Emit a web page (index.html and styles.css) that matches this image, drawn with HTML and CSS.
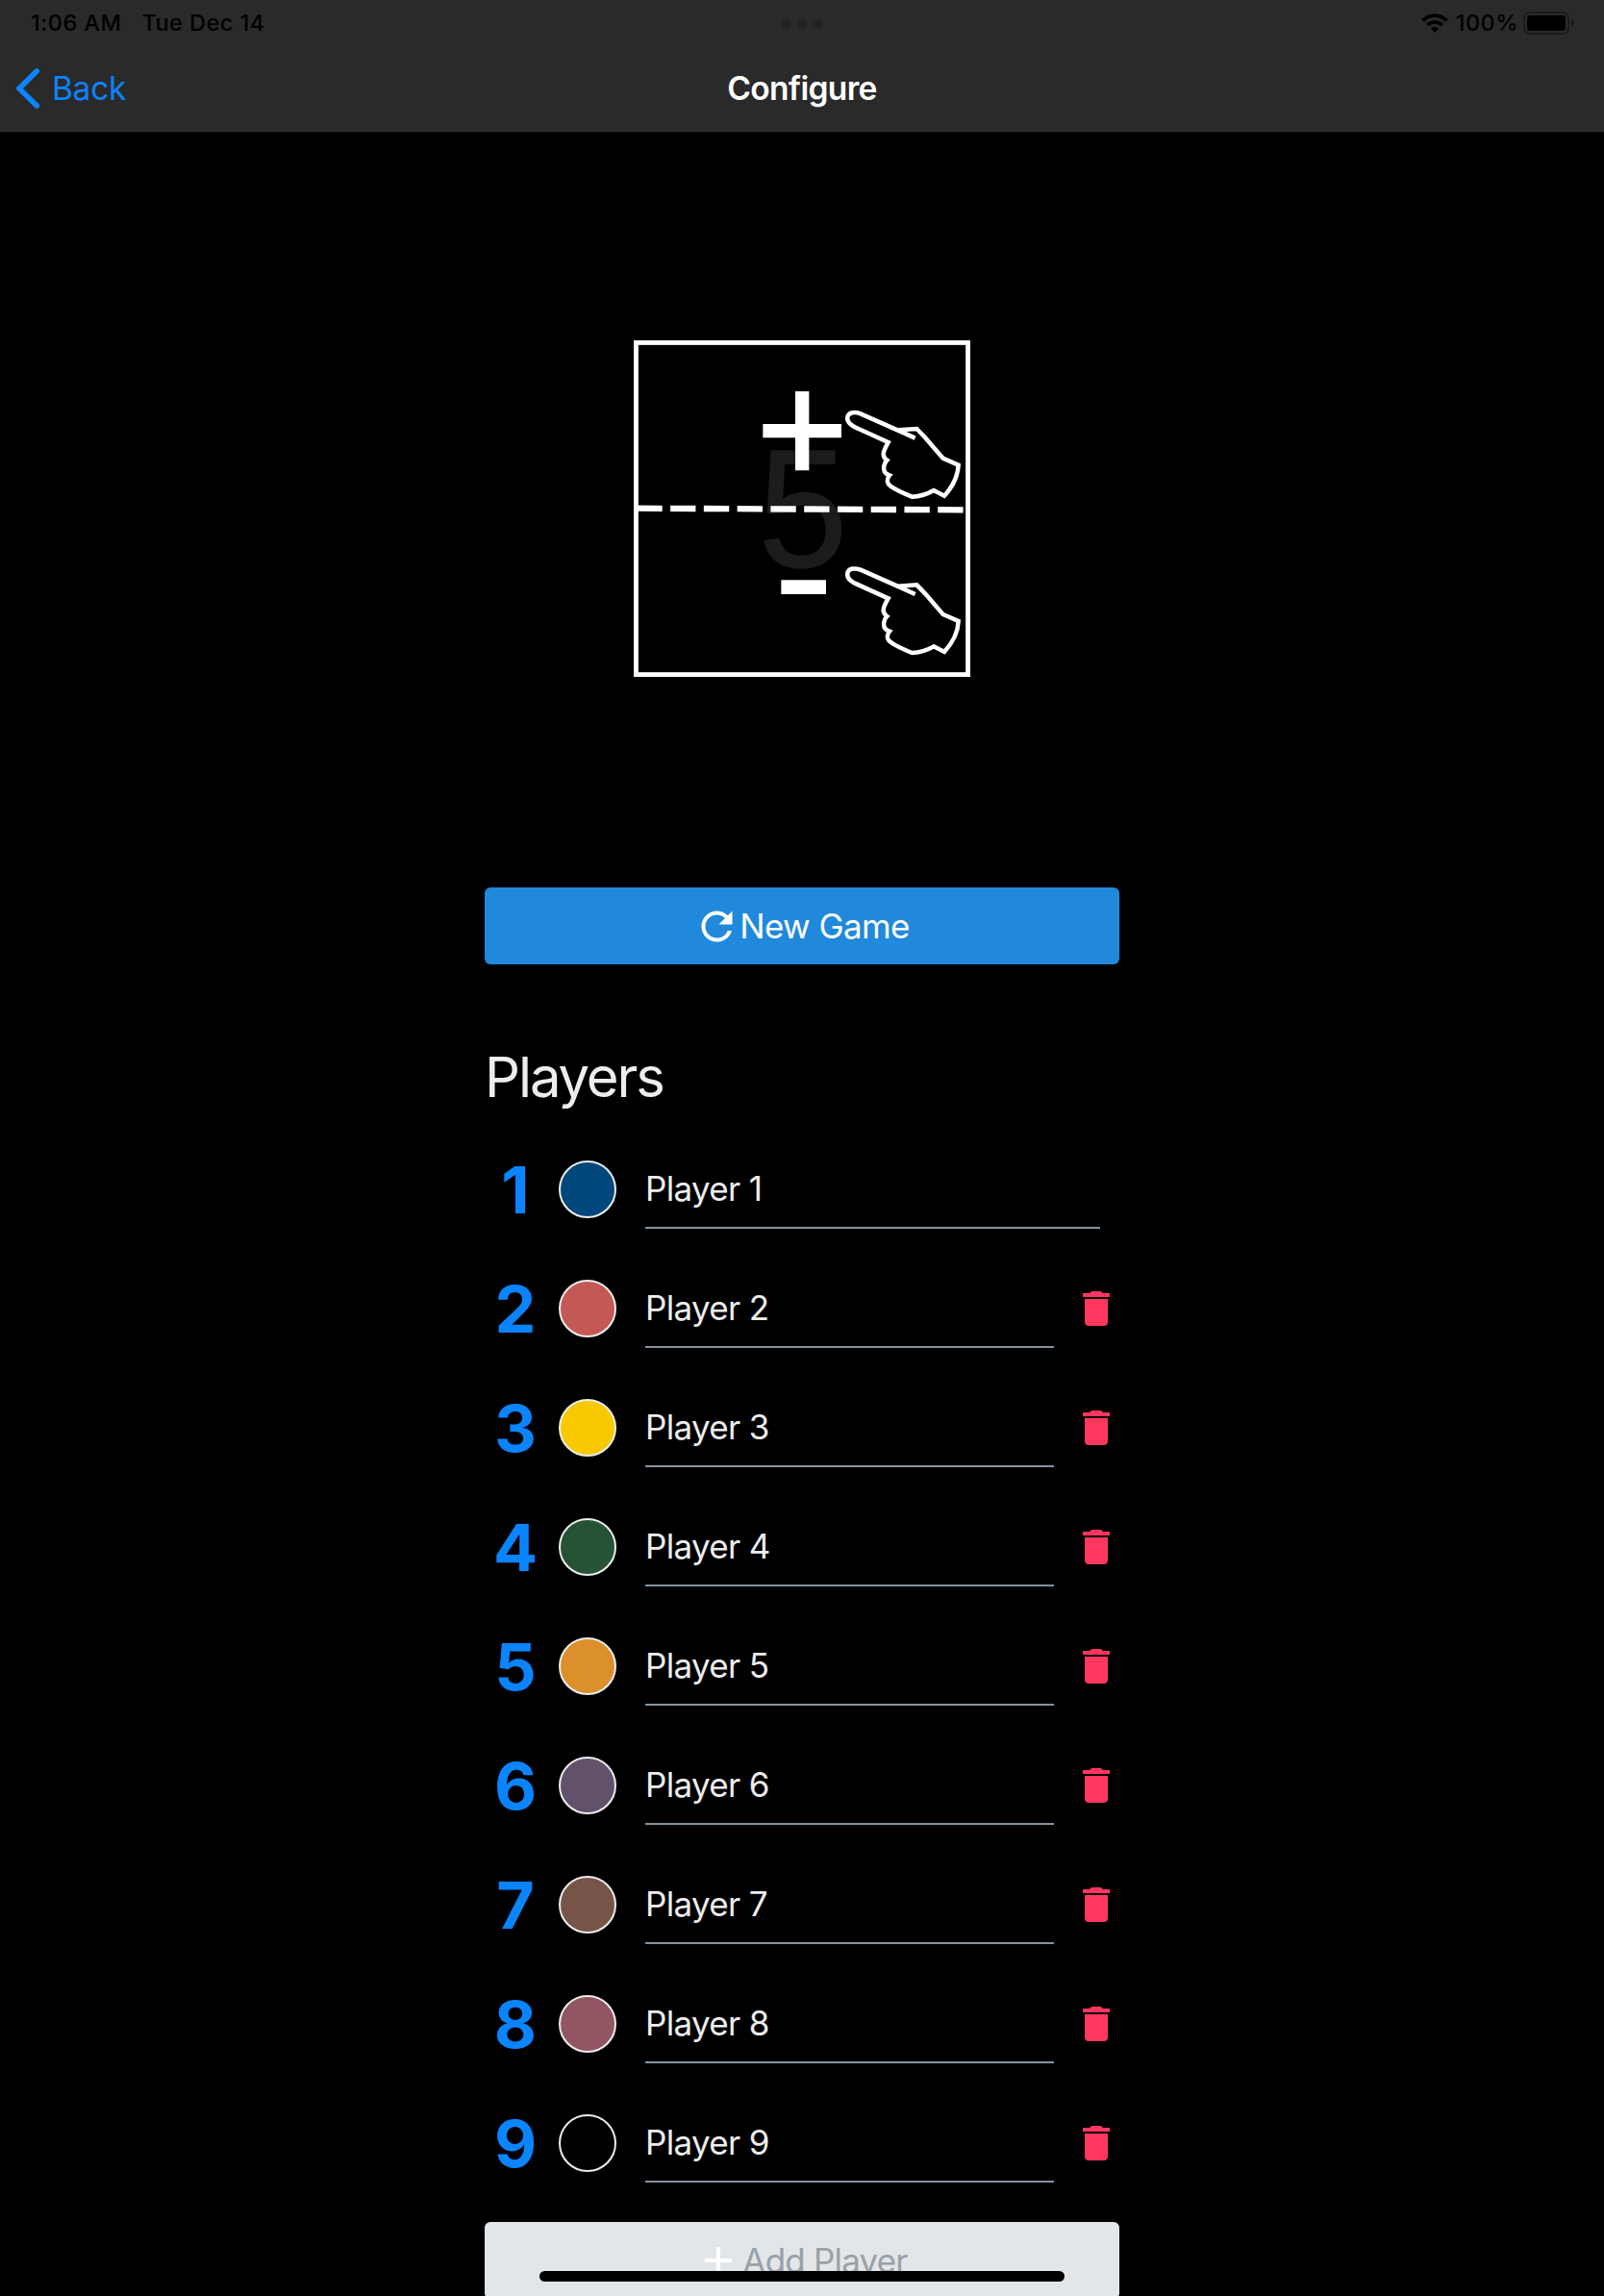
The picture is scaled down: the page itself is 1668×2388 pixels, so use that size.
FILE: index.html
```html
<!DOCTYPE html>
<html lang="en">
<head>
<meta charset="utf-8">
<title>Configure</title>
<link rel="stylesheet" href="styles.css">
</head>
<body>
<svg class="defs" width="0" height="0">
  <symbol id="trash" viewBox="0 0 28 36">
    <path d="M2 8H26V31.500Q26 36 21.500 36H6.500Q2 36 2 31.500Z"/>
    <path d="M7 2Q8.500 0 10 0H18Q19.500 0 21 2H28V6H0V2Z"/>
  </symbol>
  <symbol id="hand" viewBox="685 240 365 285">
    <path d="M905 332L850 307L735 256C716 249 700 252 695 263C690 277 700 289 717 298L821 345C812 361 805 373 806 383Q807 394 817 401C807 411 805 427 810 438Q814 444 825 448C817 458 817 470 823 477C835 490 868 504 895 515Q930 514 963 495L996 512Q1038 466 1040 416L992 395L936 330L910 303L850 307"/>
  </symbol>
</svg>
<header class="top">
  <div class="status">
    <span class="time">1:06 AM</span>
    <span class="date">Tue Dec 14</span>
    <div class="status-right">
      <svg class="wifi" viewBox="0 0 28 20">
        <path d="M1.500 7.500C8.500 .2 19.500 .2 26.500 7.500" fill="none" stroke="#000" stroke-width="3.800"/>
        <path d="M6.200 12.200C10.700 7.900 17.300 7.900 21.800 12.200" fill="none" stroke="#000" stroke-width="3.700"/>
        <path d="M9.800 15.800Q14 12 18.200 15.800L14 20Z"/>
      </svg>
      <span class="percent">100%</span>
      <svg class="battery" viewBox="0 0 54 24">
        <rect x="1" y="1" width="46" height="22" rx="6" fill="none" stroke="#1b1b1b" stroke-width="2"/>
        <rect x="4" y="4" width="40" height="16" rx="3.500"/>
        <path d="M50 8Q53 9 53 12Q53 15 50 16Z" fill="#1b1b1b"/>
      </svg>
    </div>
    <div class="dots"><i></i><i></i><i></i></div>
  </div>
  <nav class="nav">
    <a class="back">
      <svg class="chevron" viewBox="0 0 24 42"><path d="M21.200 3L3 21L21.200 39" fill="none" stroke="#0a84ff" stroke-width="5.600" stroke-linecap="round" stroke-linejoin="miter"/></svg>
      <span>Back</span>
    </a>
    <h1 class="title">Configure</h1>
  </nav>
</header>
<main class="content">
  <svg class="guide" viewBox="27 27 1050 1050">
    <rect x="34" y="34" width="1036" height="1036" fill="none" stroke="#fff" stroke-width="15"/>
    <text class="guide-digit" x="409" y="732" transform="translate(22 0) scale(.96 1)">5</text>
    <path d="M37 551L1056 556" stroke="#fff" stroke-width="19" stroke-dasharray="79 25.300"/>
    <path d="M531 186H574V288H675V331H574V433H531V331H430V288H531ZM487 775H627V819H487Z" fill="#fff"/>
    <use href="#hand" class="hand" x="685" y="240" width="365" height="285"/>
    <use href="#hand" class="hand" x="685" y="727" width="365" height="285"/>
  </svg>
  <button class="btn new-game">
    <svg class="refresh" viewBox="64 64 384 384"><path d="M256 388c-72.597 0-132-59.405-132-132 0-72.601 59.403-132 132-132 36.300 0 69.299 15.400 92.406 39.601L278 234h154V80l-51.698 51.702C348.406 99.798 304.406 80 256 80c-96.797 0-176 79.203-176 176s78.094 176 176 176c81.045 0 148.287-54.134 169.401-128H378.850c-18.745 49.561-67.138 84-122.850 84z"/></svg>
    <span>New Game</span>
  </button>
  <h2 class="heading">Players</h2>
  <ul class="players">
    <li class="row"><b class="num">1</b><i class="dot c1"></i><span class="name">Player 1</span></li>
    <li class="row"><b class="num">2</b><i class="dot c2"></i><span class="name">Player 2</span><svg class="trash"><use href="#trash"/></svg></li>
    <li class="row"><b class="num">3</b><i class="dot c3"></i><span class="name">Player 3</span><svg class="trash"><use href="#trash"/></svg></li>
    <li class="row"><b class="num">4</b><i class="dot c4"></i><span class="name">Player 4</span><svg class="trash"><use href="#trash"/></svg></li>
    <li class="row"><b class="num">5</b><i class="dot c5"></i><span class="name">Player 5</span><svg class="trash"><use href="#trash"/></svg></li>
    <li class="row"><b class="num">6</b><i class="dot c6"></i><span class="name">Player 6</span><svg class="trash"><use href="#trash"/></svg></li>
    <li class="row"><b class="num">7</b><i class="dot c7"></i><span class="name">Player 7</span><svg class="trash"><use href="#trash"/></svg></li>
    <li class="row"><b class="num">8</b><i class="dot c8"></i><span class="name">Player 8</span><svg class="trash"><use href="#trash"/></svg></li>
    <li class="row"><b class="num">9</b><i class="dot c9"></i><span class="name">Player 9</span><svg class="trash"><use href="#trash"/></svg></li>
  </ul>
  <button class="btn add">
    <svg class="plus" viewBox="0 0 28 28"><path d="M12 0H16V12H28V16H16V28H12V16H0V12H12Z"/></svg>
    <span>Add Player</span>
  </button>
</main>
<div class="home-bar"></div>
</body>
</html>
```
FILE: styles.css
```css
* { box-sizing: border-box; margin: 0; padding: 0; }
body {
  width: 1668px;
  height: 2388px;
  overflow: hidden;
  position: relative;
  background: #000;
  color: #ededed;
  font-family: Inter, "Liberation Sans", sans-serif;
}
.defs { position: absolute; }

/* Header */
.top { height: 137px; background: #2a2a2a; border-bottom: 1px solid #363636; }
.status {
  position: relative;
  display: flex;
  height: 48px;
  padding: 0 30px 0 32px;
  align-items: center;
  color: #000;
  font-size: 23.5px;
  font-weight: 500;
  letter-spacing: 0.45px;
  line-height: 48px;
}
.date { margin-left: 21px; }
.status-right { display: flex; align-items: center; margin-left: auto; }
.wifi { width: 28px; height: 20px; margin-right: 8px; }
.percent { margin-right: 5px; }
.battery { width: 54px; height: 24px; }
.dots { position: absolute; top: 20px; left: 813px; display: flex; gap: 6px; }
.dots i { width: 10px; height: 10px; border-radius: 50%; background: #222; }
.nav {
  display: grid;
  grid-template-columns: 1fr auto 1fr;
  align-items: center;
  height: 88px;
  padding: 0 17px;
}
.back {
  display: flex;
  align-items: center;
  gap: 13px;
  color: #0a84ff;
  font-size: 33.5px;
  letter-spacing: -0.3px;
}
.chevron { width: 24px; height: 42px; }
.title { color: #fff; font-size: 33.5px; font-weight: 600; letter-spacing: -0.65px; }

/* Content column */
.content { width: 660px; margin: 0 auto; padding-top: 217px; }
.guide { display: block; width: 350px; height: 350px; margin: 0 auto 219px; }
.guide-digit {
  fill: #1c1c1c;
  stroke: #1c1c1c;
  stroke-width: 4px;
  font-family: "Liberation Sans", sans-serif;
  font-size: 525px;
}
.hand { fill: none; stroke: #fff; stroke-width: 13.5; }
.btn {
  display: flex;
  width: 660px;
  height: 80px;
  align-items: center;
  justify-content: center;
  border: 0;
  border-radius: 6px;
  font-family: inherit;
  font-size: 35px;
}
.new-game { background: #2089dc; color: #fff; letter-spacing: -0.6px; }
.refresh { width: 35px; height: 35px; margin: 0 6px; fill: #fff; }
.heading {
  height: 72px;
  margin-top: 81px;
  font-size: 58px;
  font-weight: 400;
  letter-spacing: -2.1px;
  line-height: 72px;
}
.players { margin-top: 19px; list-style: none; }
.row { display: flex; height: 124px; align-items: center; padding-right: 10px; }
.num {
  width: 64px;
  color: #0a84ff;
  font-size: 68px;
  font-weight: 700;
  text-align: center;
}
.dot {
  width: 60px;
  height: 60px;
  margin: 0 30px 0 13px;
  border: 2px solid #ededed;
  border-radius: 50%;
}
.name {
  flex: 1;
  height: 82px;
  margin-right: 10px;
  border-bottom: 2px solid #86939e;
  font-size: 35px;
  letter-spacing: -0.65px;
  line-height: 80px;
}
.trash { width: 28px; height: 36px; margin-left: 20px; fill: #ff375f; }
.c1 { background: #00487c; }
.c2 { background: #c45855; }
.c3 { background: #f9c900; }
.c4 { background: #265335; }
.c5 { background: #db902b; }
.c6 { background: #61516b; }
.c7 { background: #765548; }
.c8 { background: #935562; }
.c9 { background: #000; }
.add { margin-top: 20px; background: #e3e6e8; color: #99a1a8; letter-spacing: -0.8px; }
.plus { width: 28px; height: 28px; margin: 0 11px 0 9px; fill: #fff; }

/* Home indicator overlays the page */
.home-bar {
  position: absolute;
  left: 561px;
  bottom: 15px;
  width: 546px;
  height: 11px;
  border-radius: 6px;
  background: #000;
}
```
